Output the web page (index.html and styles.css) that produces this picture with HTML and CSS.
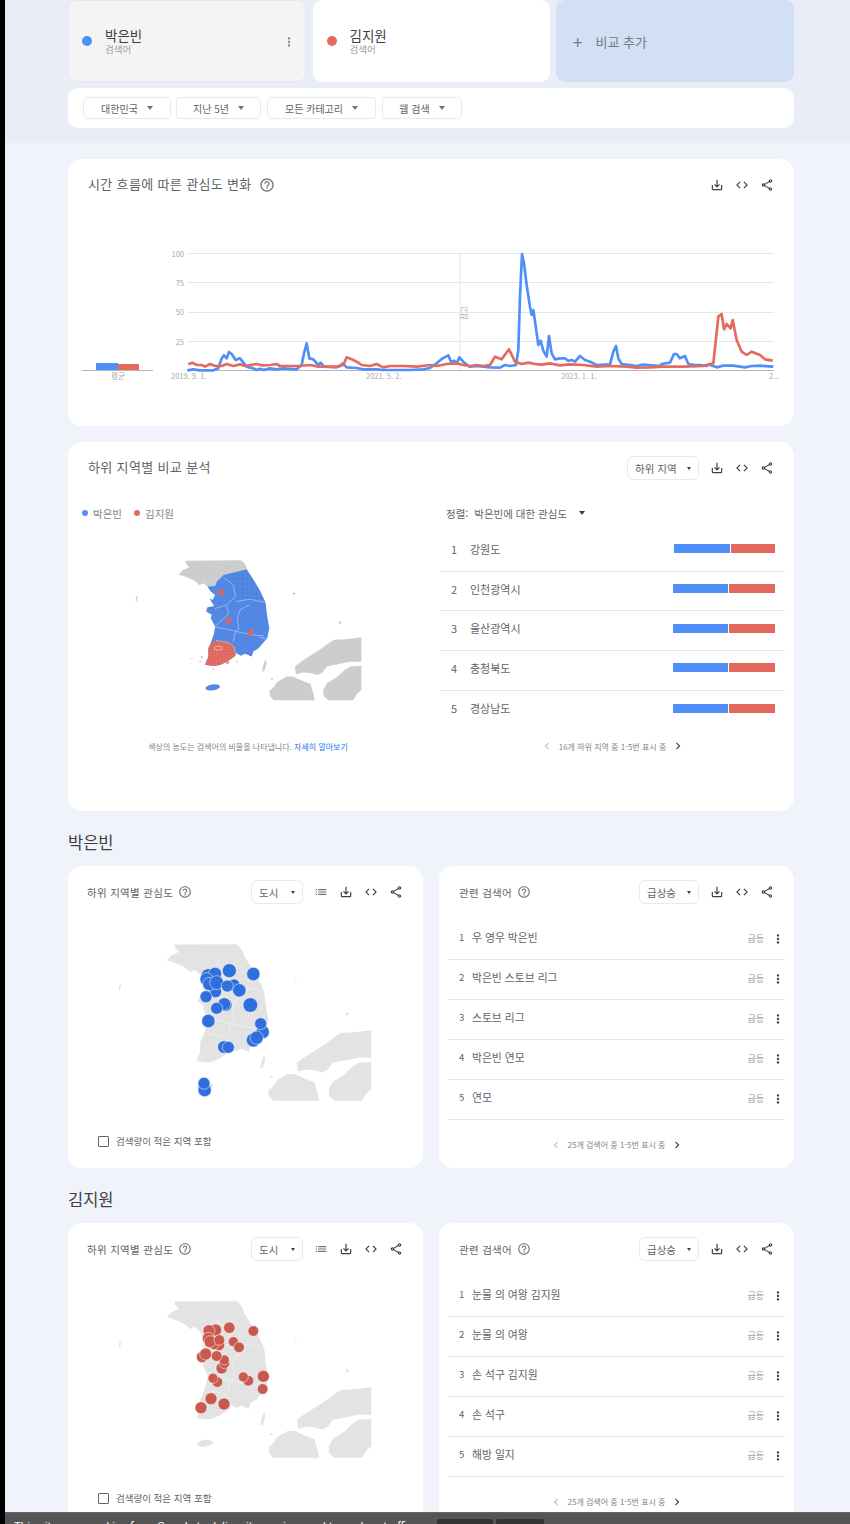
FILE: index.html
```html
<!DOCTYPE html>
<html lang="ko">
<head>
    <meta charset="UTF-8">
    <meta name="viewport" content="width=device-width, initial-scale=1.0">
    <title>Google 트렌드</title>
    <link rel="stylesheet" href="styles.css">
</head>
<body>
    <!-- Gemeinsame Formen fuer Icons und Karten -->
    <svg class="defs" aria-hidden="true">
        <defs>
            <path id="i-download" d="M19 12v7H5v-7H3v7c0 1.1.9 2 2 2h14c1.1 0 2-.9 2-2v-7h-2zm-6 .67l2.59-2.58L17 11.5l-5 5-5-5 1.41-1.41L11 12.67V3h2z"/>
            <path id="i-code" d="M9.4 16.6L4.8 12l4.6-4.6L8 6l-6 6 6 6 1.4-1.4zm5.2 0l4.6-4.6-4.6-4.6L16 6l6 6-6 6-1.4-1.4z"/>
            <path id="i-share" d="M18 16.08c-.76 0-1.44.3-1.96.77L8.91 12.7c.05-.23.09-.46.09-.7s-.04-.47-.09-.7l7.05-4.11c.54.5 1.25.81 2.04.81 1.66 0 3-1.34 3-3s-1.34-3-3-3-3 1.34-3 3c0 .24.04.47.09.7L8.04 9.81C7.5 9.31 6.79 9 6 9c-1.66 0-3 1.34-3 3s1.34 3 3 3c.79 0 1.5-.31 2.04-.81l7.12 4.16c-.05.21-.08.43-.08.65 0 1.61 1.31 2.92 2.92 2.92s2.92-1.31 2.92-2.92-1.31-2.92-2.92-2.92zM18 4c.55 0 1 .45 1 1s-.45 1-1 1-1-.45-1-1 .45-1 1-1zM6 13c-.55 0-1-.45-1-1s.45-1 1-1 1 .45 1 1-.45 1-1 1zm12 7.02c-.55 0-1-.45-1-1s.45-1 1-1 1 .45 1 1-.45 1-1 1z"/>
            <path id="i-help" d="M11 18h2v-2h-2v2zm1-16C6.48 2 2 6.48 2 12s4.48 10 10 10 10-4.48 10-10S17.52 2 12 2zm0 18c-4.41 0-8-3.59-8-8s3.59-8 8-8 8 3.59 8 8-3.59 8-8 8zm0-14c-2.21 0-4 1.79-4 4h2c0-1.1.9-2 2-2s2 .9 2 2c0 2-3 1.75-3 5h2c0-2.25 3-2.5 3-5 0-2.21-1.79-4-4-4z"/>
            <path id="i-list" d="M3 13h2v-2H3v2zm0 4h2v-2H3v2zm0-8h2V7H3v2zm4 4h14v-2H7v2zm0 4h14v-2H7v2zM7 7v2h14V7H7z"/>
            <path id="i-kebab" d="M12 8c1.1 0 2-.9 2-2s-.9-2-2-2-2 .9-2 2 .9 2 2 2zm0 2c-1.1 0-2 .9-2 2s.9 2 2 2 2-.9 2-2-.9-2-2-2zm0 6c-1.1 0-2 .9-2 2s.9 2 2 2 2-.9 2-2-.9-2-2-2z"/>
            <path id="i-prev" d="M15.4 7.4L14 6l-6 6 6 6 1.4-1.4L10.8 12z"/>
            <path id="i-next" d="M10 6L8.6 7.4 13.2 12l-4.6 4.6L10 18l6-6z"/>

            <g id="outer">
                <path d="M197 32L362 31Q375 38 382 58L345 68L310 75L290 95L283 110L262 110L250 100L238 106L222 92L200 82L175 74L188 60L208 52L196 40Z"/>
                <path d="M725 262L680 268L642 270L620 285L600 300L565 322L540 338L525 350L528 374L548 368L572 370L592 376L606 370L622 350L650 344L690 336L725 336Z"/>
                <path d="M725 348L692 350L672 362L652 382L622 400L610 420L612 440L625 452L700 452L712 432L725 420Z"/>
                <path d="M448 424L462 412L472 396L500 380L520 380L545 392L572 402L580 430L585 452L462 452L450 440Z"/>
                <path d="M437 328L430 345L426 366L434 362L440 340Z"/>
                <circle cx="660" cy="218" r="4"/>
                <circle cx="456" cy="388" r="3"/>
                <path d="M48 140L52 138L50 155L46 152Z"/>
            </g>
            <g id="korea">
                <path d="M310 75L380 58L402 92L420 122L437 158L441 195L448 235L442 265L420 290L415 296L400 305L395 320L375 312L362 318L348 310L346 318L335 326L320 336L300 346L280 349L255 345L265 320L265 295L270 285L278 262L282 250L285 230L272 205L275 195L258 185L262 172L282 168L268 145L278 150L285 135L272 125L262 110L285 108L290 95Z"/>
                <ellipse cx="278" cy="413" rx="22" ry="9" transform="rotate(-8 278 413)"/>
                <circle cx="522" cy="131" r="2.5"/>
            </g>
            <g id="borders">
                <polyline points="310,82 340,105 346,140 320,165 285,176"/>
                <polyline points="346,155 390,148 437,158"/>
                <polyline points="320,170 326,192 285,230"/>
                <polyline points="352,205 360,180 388,165"/>
                <polyline points="352,205 356,236 345,250 340,276"/>
                <polyline points="345,244 400,256 432,258"/>
                <polyline points="285,232 320,238 345,244"/>
                <polyline points="418,262 441,268"/>
                <polyline points="288,272 326,278 343,292 346,310"/>
            </g>
            <pattern id="dots-dark" width="14" height="14" patternUnits="userSpaceOnUse">
                <circle cx="4" cy="4" r="1.4" fill="#2c56a8"/>
            </pattern>
            <pattern id="dots-light" width="9" height="9" patternUnits="userSpaceOnUse">
                <circle cx="3" cy="3" r="1.3" fill="#f7c9c4"/>
            </pattern>
            <pattern id="dots-white" width="9" height="9" patternUnits="userSpaceOnUse">
                <circle cx="3" cy="3" r="1" fill="#fff" fill-opacity=".7"/>
            </pattern>
        </defs>
    </svg>

    <div class="page">
        <!-- Suchbegriffe und Filter -->
        <header class="top">
            <div class="terms">
                <div class="term term-active">
                    <span class="dot dot-big blue"></span>
                    <div>
                        <div class="term-name">박은빈</div>
                        <div class="term-type">검색어</div>
                    </div>
                    <svg class="icon term-more" viewBox="0 0 24 24"><use href="#i-kebab"/></svg>
                </div>
                <div class="term">
                    <span class="dot dot-big red"></span>
                    <div>
                        <div class="term-name">김지원</div>
                        <div class="term-type">검색어</div>
                    </div>
                </div>
                <div class="term term-add">
                    <span class="plus">+</span>
                    <span>비교 추가</span>
                </div>
            </div>
            <div class="filters">
                <div class="chip chip-1">대한민국 <i class="caret"></i></div>
                <div class="chip chip-2">지난 5년 <i class="caret"></i></div>
                <div class="chip chip-3">모든 카테고리 <i class="caret"></i></div>
                <div class="chip chip-4">웹 검색 <i class="caret"></i></div>
            </div>
        </header>

        <main class="content">
            <!-- Zeitverlauf -->
            <section class="card card-time">
                <div class="card-head">
                    <h2 class="card-title">시간 흐름에 따른 관심도 변화</h2>
                    <svg class="icon help help-wide" viewBox="0 0 24 24"><use href="#i-help"/></svg>
                    <div class="tools">
                        <svg class="icon" viewBox="0 0 24 24"><use href="#i-download"/></svg>
                        <svg class="icon" viewBox="0 0 24 24"><use href="#i-code"/></svg>
                        <svg class="icon" viewBox="0 0 24 24"><use href="#i-share"/></svg>
                    </div>
                </div>
                <svg class="chart" viewBox="68 211 726 215" width="726" height="215">
                    <g class="grid">
                        <line x1="187" x2="774" y1="253.5" y2="253.5"/>
                        <line x1="187" x2="774" y1="282.5" y2="282.5"/>
                        <line x1="187" x2="774" y1="312.5" y2="312.5"/>
                        <line x1="187" x2="774" y1="341.5" y2="341.5"/>
                        <line x1="460" x2="460" y1="253" y2="370"/>
                    </g>
                    <g class="axis">
                        <text x="184" y="257" text-anchor="end">100</text>
                        <text x="184" y="286" text-anchor="end">75</text>
                        <text x="184" y="315" text-anchor="end">50</text>
                        <text x="184" y="345" text-anchor="end">25</text>
                        <text x="171" y="379">2019. 9. 1.</text>
                        <text x="366" y="379">2021. 5. 2.</text>
                        <text x="561" y="379">2023. 1. 1.</text>
                        <text x="769" y="379">2...</text>
                        <text x="118" y="379" text-anchor="middle">평균</text>
                        <text transform="translate(467 320) rotate(-90)">참고</text>
                    </g>
                    <rect x="96" y="363" width="22" height="7" fill="#4f8ff7"/>
                    <rect x="118" y="364" width="21" height="6" fill="#e4695f"/>
                    <line x1="82" x2="153" y1="370.5" y2="370.5" class="base"/>
                    <line x1="187" x2="774" y1="370.5" y2="370.5" class="base"/>
                    <g transform="translate(70 230) scale(.33333)" class="lines">
                        <polyline class="line-blue" points="352,421 370,418 390,421 430,421 445,415 455,385 462,376 470,385 477,366 485,372 497,390 510,385 520,398 530,410 550,415 560,420 570,416 580,420 600,415 620,418 640,415 680,418 695,405 702,370 710,340 718,385 730,388 745,405 752,398 762,410 800,412 810,408 818,400 830,412 860,414 880,418 920,418 940,420 1020,420 1060,418 1080,414 1100,400 1118,385 1135,376 1143,395 1152,392 1160,400 1168,382 1180,395 1195,408 1200,410 1220,408 1260,412 1290,413 1305,405 1320,408 1338,405 1345,360 1350,200 1356,72 1362,100 1370,165 1380,230 1385,255 1390,240 1398,295 1405,345 1412,332 1420,362 1430,380 1437,318 1445,370 1455,388 1470,385 1485,385 1495,393 1505,390 1515,395 1530,378 1545,390 1560,395 1580,405 1620,403 1630,365 1638,348 1645,385 1655,402 1680,405 1700,408 1720,404 1770,408 1775,402 1800,398 1812,372 1820,372 1830,385 1845,378 1855,402 1875,405 1890,405 1910,408 1915,403 1940,412 1960,407 1990,407 2025,412 2045,408 2070,407 2110,410"/>
                        <polyline class="line-red" points="355,403 367,398 380,405 395,405 405,410 420,402 435,408 455,408 470,402 490,408 510,403 525,408 540,405 560,402 575,406 600,405 620,402 630,408 660,408 690,408 720,405 745,410 800,410 820,405 830,382 845,388 860,395 875,405 900,408 920,402 940,412 960,408 1000,408 1040,410 1080,405 1100,408 1130,402 1160,400 1180,405 1200,408 1220,405 1240,408 1260,405 1275,380 1295,388 1317,358 1335,395 1355,402 1375,398 1395,402 1415,404 1440,400 1470,406 1500,403 1540,405 1580,410 1620,408 1670,410 1700,413 1740,412 1780,410 1840,410 1900,408 1930,400 1945,260 1955,252 1962,298 1970,282 1982,295 1988,270 2000,330 2015,365 2030,375 2045,365 2070,375 2085,388 2108,392"/>
                    </g>
                </svg>
            </section>

            <!-- Regionenvergleich -->
            <section class="card card-compare">
                <div class="card-head">
                    <h2 class="card-title">하위 지역별 비교 분석</h2>
                    <div class="tools">
                        <div class="select select-region">하위 지역 <i class="caret caret-dark"></i></div>
                        <svg class="icon" viewBox="0 0 24 24"><use href="#i-download"/></svg>
                        <svg class="icon" viewBox="0 0 24 24"><use href="#i-code"/></svg>
                        <svg class="icon" viewBox="0 0 24 24"><use href="#i-share"/></svg>
                    </div>
                </div>
                <div class="compare-body">
                    <div class="compare-map">
                        <div class="legend">
                            <span class="dot blue"></span><span>박은빈</span>
                            <span class="dot red"></span><span>김지원</span>
                        </div>
                        <svg class="map-big" viewBox="0 0 780 460" width="260" height="153">
                            <use href="#outer" fill="#cdcdcd"/>
                            <use href="#korea" fill="#5288e4"/>
                            <path d="M310 75L380 58L402 92L420 122L437 158L390 148L346 155L346 140L340 105Z" fill="url(#dots-dark)"/>
                            <path d="M270 285L288 272L326 278L343 292L346 318L335 326L320 336L300 346L280 349L255 345L265 320L265 295Z" fill="#e0655b"/>
                            <path d="M270 285L288 272L326 278L343 292L346 318L335 326L320 336L300 346L280 349L255 345L265 320L265 295Z" fill="url(#dots-light)"/>
                            <use href="#borders" class="borders"/>
                            <ellipse cx="295" cy="295" rx="12" ry="6" class="gwangju"/>
                            <circle cx="303" cy="127" r="9" fill="#e0655b"/>
                            <circle cx="325" cy="212" r="9" fill="#e0655b"/>
                            <ellipse cx="392" cy="248" rx="6" ry="13" transform="rotate(35 392 248)" fill="#e0655b"/>
                            <circle cx="245" cy="322" r="4" fill="#f5c4bc"/>
                            <circle cx="240" cy="335" r="3" fill="#f5c4bc"/>
                            <circle cx="322" cy="338" r="5" fill="#e88f86"/>
                            <circle cx="350" cy="335" r="3" fill="#f5c4bc"/>
                            <circle cx="280" cy="358" r="3" fill="#f5c4bc"/>
                            <circle cx="212" cy="327" r="2" fill="#f5c4bc"/>
                        </svg>
                        <p class="map-note">색상의 농도는 검색어의 비율을 나타냅니다. <span class="link">자세히 알아보기</span></p>
                    </div>
                    <div class="compare-list">
                        <div class="sort"><span>정렬:</span><span>박은빈에 대한 관심도</span><i class="caret caret-dark"></i></div>
                        <div class="row"><span class="row-num">1</span><span class="row-name">강원도</span><div class="bar"><span class="blue" style="width:56px"></span><span class="red" style="width:44px"></span></div></div>
                        <div class="row"><span class="row-num">2</span><span class="row-name">인천광역시</span><div class="bar"><span class="blue" style="width:55px"></span><span class="red" style="width:46px"></span></div></div>
                        <div class="row"><span class="row-num">3</span><span class="row-name">울산광역시</span><div class="bar"><span class="blue" style="width:55px"></span><span class="red" style="width:46px"></span></div></div>
                        <div class="row"><span class="row-num">4</span><span class="row-name">충청북도</span><div class="bar"><span class="blue" style="width:55px"></span><span class="red" style="width:46px"></span></div></div>
                        <div class="row row-last"><span class="row-num">5</span><span class="row-name">경상남도</span><div class="bar"><span class="blue" style="width:55px"></span><span class="red" style="width:46px"></span></div></div>
                        <div class="pager">
                            <svg class="pager-icon pager-off" viewBox="0 0 24 24"><use href="#i-prev"/></svg>
                            <span>16개 하위 지역 중 1-5번 표시 중</span>
                            <svg class="pager-icon" viewBox="0 0 24 24"><use href="#i-next"/></svg>
                        </div>
                    </div>
                </div>
            </section>

            <!-- 박은빈 -->
            <h3 class="term-heading">박은빈</h3>
            <div class="pair">
                <section class="card card-half">
                    <div class="card-head card-head-map">
                        <h2 class="card-title card-title-small">하위 지역별 관심도</h2>
                        <svg class="icon help" viewBox="0 0 24 24"><use href="#i-help"/></svg>
                        <div class="tools">
                            <div class="select select-city">도시 <i class="caret caret-dark"></i></div>
                            <svg class="icon icon-gray" viewBox="0 0 24 24"><use href="#i-list"/></svg>
                            <svg class="icon" viewBox="0 0 24 24"><use href="#i-download"/></svg>
                            <svg class="icon" viewBox="0 0 24 24"><use href="#i-code"/></svg>
                            <svg class="icon" viewBox="0 0 24 24"><use href="#i-share"/></svg>
                        </div>
                    </div>
                    <svg class="map-small" viewBox="0 144 1050 621" width="350" height="207">
                        <g transform="translate(95 188) scale(1.116)">
                            <use href="#outer" fill="#e3e3e3"/>
                            <use href="#korea" fill="#e3e3e3"/>
                            <use href="#borders" class="borders"/>
                        </g>
                        <g class="bubbles bubbles-blue">
                            <circle cx="478" cy="302" r="21"/>
                            <circle cx="550" cy="312" r="20"/>
                            <circle cx="415" cy="318" r="22"/>
                            <circle cx="435" cy="312" r="20"/>
                            <circle cx="410" cy="328" r="20"/>
                            <circle cx="492" cy="345" r="18"/>
                            <circle cx="437" cy="365" r="18"/>
                            <circle cx="418" cy="342" r="20"/>
                            <circle cx="440" cy="338" r="21"/>
                            <circle cx="472" cy="348" r="18"/>
                            <circle cx="508" cy="361" r="20"/>
                            <circle cx="408" cy="380" r="18"/>
                            <circle cx="467" cy="405" r="19"/>
                            <circle cx="463" cy="402" r="19"/>
                            <circle cx="440" cy="415" r="18"/>
                            <circle cx="541" cy="405" r="22"/>
                            <circle cx="415" cy="453" r="20"/>
                            <circle cx="578" cy="486" r="20"/>
                            <circle cx="572" cy="461" r="18"/>
                            <circle cx="550" cy="510" r="21"/>
                            <circle cx="560" cy="503" r="20"/>
                            <circle cx="462" cy="531" r="19"/>
                            <circle cx="475" cy="532" r="18"/>
                            <circle cx="404" cy="660" r="20"/>
                            <circle cx="402" cy="640" r="18"/>
                        </g>
                        <circle cx="472" cy="348" r="15" fill="url(#dots-white)"/>
                    </svg>
                    <label class="check"><span class="box"></span>검색량이 적은 지역 포함</label>
                </section>

                <section class="card card-half">
                    <div class="card-head card-head-list">
                        <h2 class="card-title card-title-small">관련 검색어</h2>
                        <svg class="icon help" viewBox="0 0 24 24"><use href="#i-help"/></svg>
                        <div class="tools">
                            <div class="select select-rise">급상승 <i class="caret caret-dark"></i></div>
                            <svg class="icon" viewBox="0 0 24 24"><use href="#i-download"/></svg>
                            <svg class="icon" viewBox="0 0 24 24"><use href="#i-code"/></svg>
                            <svg class="icon" viewBox="0 0 24 24"><use href="#i-share"/></svg>
                        </div>
                    </div>
                    <div class="queries">
                        <div class="query"><span class="query-num">1</span><span class="query-name">우 영우 박은빈</span><span class="query-tag">급등</span><svg class="icon kebab" viewBox="0 0 24 24"><use href="#i-kebab"/></svg></div>
                        <div class="query"><span class="query-num">2</span><span class="query-name">박은빈 스토브 리그</span><span class="query-tag">급등</span><svg class="icon kebab" viewBox="0 0 24 24"><use href="#i-kebab"/></svg></div>
                        <div class="query"><span class="query-num">3</span><span class="query-name">스토브 리그</span><span class="query-tag">급등</span><svg class="icon kebab" viewBox="0 0 24 24"><use href="#i-kebab"/></svg></div>
                        <div class="query"><span class="query-num">4</span><span class="query-name">박은빈 연모</span><span class="query-tag">급등</span><svg class="icon kebab" viewBox="0 0 24 24"><use href="#i-kebab"/></svg></div>
                        <div class="query"><span class="query-num">5</span><span class="query-name">연모</span><span class="query-tag">급등</span><svg class="icon kebab" viewBox="0 0 24 24"><use href="#i-kebab"/></svg></div>
                    </div>
                    <div class="pager pager-queries">
                        <svg class="pager-icon pager-off" viewBox="0 0 24 24"><use href="#i-prev"/></svg>
                        <span>25개 검색어 중 1-5번 표시 중</span>
                        <svg class="pager-icon" viewBox="0 0 24 24"><use href="#i-next"/></svg>
                    </div>
                </section>
            </div>

            <!-- 김지원 -->
            <h3 class="term-heading">김지원</h3>
            <div class="pair">
                <section class="card card-half">
                    <div class="card-head card-head-map">
                        <h2 class="card-title card-title-small">하위 지역별 관심도</h2>
                        <svg class="icon help" viewBox="0 0 24 24"><use href="#i-help"/></svg>
                        <div class="tools">
                            <div class="select select-city">도시 <i class="caret caret-dark"></i></div>
                            <svg class="icon icon-gray" viewBox="0 0 24 24"><use href="#i-list"/></svg>
                            <svg class="icon" viewBox="0 0 24 24"><use href="#i-download"/></svg>
                            <svg class="icon" viewBox="0 0 24 24"><use href="#i-code"/></svg>
                            <svg class="icon" viewBox="0 0 24 24"><use href="#i-share"/></svg>
                        </div>
                    </div>
                    <svg class="map-small" viewBox="0 135 1050 621" width="350" height="207">
                        <g transform="translate(95 179) scale(1.116)">
                            <use href="#outer" fill="#e3e3e3"/>
                            <use href="#korea" fill="#e3e3e3"/>
                            <use href="#borders" class="borders"/>
                        </g>
                        <g class="bubbles bubbles-red">
                            <circle cx="478" cy="293" r="17"/>
                            <circle cx="550" cy="303" r="16"/>
                            <circle cx="437" cy="300" r="18"/>
                            <circle cx="417" cy="302" r="18"/>
                            <circle cx="447" cy="345" r="17"/>
                            <circle cx="432" cy="345" r="14"/>
                            <circle cx="415" cy="325" r="18"/>
                            <circle cx="420" cy="335" r="18"/>
                            <circle cx="448" cy="330" r="16"/>
                            <circle cx="490" cy="335" r="15"/>
                            <circle cx="507" cy="352" r="16"/>
                            <circle cx="396" cy="381" r="17"/>
                            <circle cx="407" cy="372" r="18"/>
                            <circle cx="455" cy="415" r="17"/>
                            <circle cx="463" cy="400" r="16"/>
                            <circle cx="463" cy="390" r="15"/>
                            <circle cx="440" cy="378" r="16"/>
                            <circle cx="442" cy="456" r="16"/>
                            <circle cx="429" cy="445" r="15"/>
                            <circle cx="535" cy="452" r="16"/>
                            <circle cx="520" cy="441" r="15"/>
                            <circle cx="580" cy="439" r="18"/>
                            <circle cx="578" cy="477" r="16"/>
                            <circle cx="423" cy="506" r="18"/>
                            <circle cx="393" cy="533" r="18"/>
                            <circle cx="462" cy="522" r="18"/>
                        </g>
                        <circle cx="478" cy="293" r="13" fill="url(#dots-white)"/>
                        <circle cx="520" cy="441" r="13" fill="url(#dots-white)"/>
                        <circle cx="440" cy="378" r="12" fill="url(#dots-white)"/>
                    </svg>
                    <label class="check"><span class="box"></span>검색량이 적은 지역 포함</label>
                </section>

                <section class="card card-half">
                    <div class="card-head card-head-list">
                        <h2 class="card-title card-title-small">관련 검색어</h2>
                        <svg class="icon help" viewBox="0 0 24 24"><use href="#i-help"/></svg>
                        <div class="tools">
                            <div class="select select-rise">급상승 <i class="caret caret-dark"></i></div>
                            <svg class="icon" viewBox="0 0 24 24"><use href="#i-download"/></svg>
                            <svg class="icon" viewBox="0 0 24 24"><use href="#i-code"/></svg>
                            <svg class="icon" viewBox="0 0 24 24"><use href="#i-share"/></svg>
                        </div>
                    </div>
                    <div class="queries">
                        <div class="query"><span class="query-num">1</span><span class="query-name">눈물 의 여왕 김지원</span><span class="query-tag">급등</span><svg class="icon kebab" viewBox="0 0 24 24"><use href="#i-kebab"/></svg></div>
                        <div class="query"><span class="query-num">2</span><span class="query-name">눈물 의 여왕</span><span class="query-tag">급등</span><svg class="icon kebab" viewBox="0 0 24 24"><use href="#i-kebab"/></svg></div>
                        <div class="query"><span class="query-num">3</span><span class="query-name">손 석구 김지원</span><span class="query-tag">급등</span><svg class="icon kebab" viewBox="0 0 24 24"><use href="#i-kebab"/></svg></div>
                        <div class="query"><span class="query-num">4</span><span class="query-name">손 석구</span><span class="query-tag">급등</span><svg class="icon kebab" viewBox="0 0 24 24"><use href="#i-kebab"/></svg></div>
                        <div class="query"><span class="query-num">5</span><span class="query-name">해방 일지</span><span class="query-tag">급등</span><svg class="icon kebab" viewBox="0 0 24 24"><use href="#i-kebab"/></svg></div>
                    </div>
                    <div class="pager pager-queries">
                        <svg class="pager-icon pager-off" viewBox="0 0 24 24"><use href="#i-prev"/></svg>
                        <span>25개 검색어 중 1-5번 표시 중</span>
                        <svg class="pager-icon" viewBox="0 0 24 24"><use href="#i-next"/></svg>
                    </div>
                </section>
            </div>
        </main>

        <!-- Cookie-Leiste liegt ueber dem Inhalt -->
        <div class="cookie">
            <span class="cookie-text">This site uses cookies from Google to deliver its services and to analyze traffic.</span>
            <span class="cookie-btn cookie-more">Learn more</span>
            <span class="cookie-btn cookie-ok">Ok, got it</span>
        </div>
    </div>
</body>
</html>
```

FILE: styles.css
```css
html, body {
    margin: 0;
    height: 1524px;
    overflow: hidden;
    background-color: #000;
}
body {
    font-family: "Noto Sans CJK KR", "Noto Sans", Roboto, sans-serif;
    color: #5f6368;
}
h2, h3, p {
    margin: 0;
    font-weight: 400;
}
.defs {
    position: absolute;
    width: 0;
    height: 0;
}
.page {
    position: relative;
    margin-left: 5px;
    height: 1524px;
    overflow: hidden;
    background-color: #f0f3f9;
}

/* Kopfbereich */
.top {
    height: 143px;
    padding: 0 56px 0 63px;
    box-sizing: border-box;
    background-color: #e8edf6;
}
.terms {
    display: grid;
    grid-template-columns: 238px 237px 238px;
    gap: 6.5px;
    height: 82px;
}
.term {
    position: relative;
    display: flex;
    align-items: center;
    gap: 13px;
    padding-left: 14px;
    background-color: #fff;
    border-radius: 9px;
}
.term-active {
    background-color: #f4f4f4;
    box-shadow: 0 0 0 1px #e7e9ec inset;
}
.term-name {
    font-size: 13.5px;
    line-height: 16px;
    color: #3c4043;
}
.term-type {
    font-size: 9.5px;
    line-height: 12px;
    color: #9aa0a6;
}
.term .term-more {
    position: absolute;
    right: 10px;
    top: 35px;
    fill: #80868b;
}
.term-add {
    gap: 13px;
    padding-left: 17px;
    background-color: #d2e0f5;
    font-size: 13px;
    color: #757b82;
}
.plus {
    font-size: 17px;
    line-height: 17px;
}
.dot {
    display: inline-block;
    width: 6px;
    height: 6px;
    border-radius: 50%;
}
.dot-big {
    width: 10px;
    height: 10px;
    flex: none;
}
.blue {
    background-color: #4f8ff7;
}
.red {
    background-color: #e4695f;
}
.filters {
    display: flex;
    align-items: center;
    gap: 5px;
    height: 40px;
    margin-top: 6px;
    padding-left: 15px;
    background-color: #fff;
    border-radius: 10px;
}
.chip {
    display: flex;
    align-items: center;
    justify-content: center;
    gap: 9px;
    box-sizing: border-box;
    height: 22px;
    border: 1px solid #e8eaed;
    border-radius: 4px;
    font-size: 10px;
    color: #5f6368;
}
.chip-1 { width: 88px; }
.chip-2 { width: 85px; }
.chip-3 { width: 109px; margin-left: 1px; }
.chip-4 { width: 80px; margin-left: 1px; }
.caret {
    display: inline-block;
    width: 0;
    height: 0;
    border-left: 3.5px solid transparent;
    border-right: 3.5px solid transparent;
    border-top: 4px solid #70757a;
}
.caret-dark {
    border-top-color: #3c4043;
}

/* Karten */
.content {
    padding: 16px 56px 0 63px;
}
.card {
    background-color: #fff;
    border-radius: 14px;
}
.card-time {
    height: 267px;
}
.card-compare {
    height: 369px;
    margin-top: 16px;
}
.card-head {
    display: flex;
    align-items: center;
    height: 52px;
    padding: 0 20px;
}
.card-head-map {
    padding-left: 19px;
}
.card-title {
    margin-bottom: 3px;
    font-size: 13px;
    letter-spacing: .35px;
    color: #5f6368;
}
.card-title-small {
    margin-bottom: 0;
    font-size: 10.5px;
    letter-spacing: .3px;
}
.tools {
    display: flex;
    align-items: center;
    gap: 11px;
    margin-left: auto;
}
.icon {
    display: block;
    width: 14px;
    height: 14px;
    fill: #3c4043;
}
.icon-gray {
    fill: #70757a;
}
.help {
    margin-left: 5px;
    fill: #70757a;
}
.help-wide {
    width: 16px;
    height: 16px;
    margin-left: 7px;
}
.select {
    display: flex;
    align-items: center;
    justify-content: space-between;
    box-sizing: border-box;
    height: 24px;
    padding: 0 7px;
    border: 1px solid #e8eaed;
    border-radius: 6px;
    font-size: 10.5px;
    color: #5f6368;
}
.select .caret {
    border-left-width: 2.5px;
    border-right-width: 2.5px;
    border-top-width: 3px;
}
.select-region { width: 72px; }
.select-city { width: 52px; margin-right: 0; }
.select-rise { width: 60px; }

/* Zeitverlauf */
.chart {
    display: block;
}
.grid line {
    stroke: #e6e6e6;
    stroke-width: 1;
}
.base {
    stroke: #b5b5b5;
    stroke-width: 1;
}
.axis text {
    font-size: 7.5px;
    fill: #a8a8a8;
}
.lines polyline {
    fill: none;
    stroke-width: 8;
    stroke-linejoin: round;
}
.line-blue {
    stroke: #4f8ff7;
}
.line-red {
    stroke: #e4695f;
}

/* Regionenvergleich */
.compare-body {
    display: grid;
    grid-template-columns: 360px 345px;
    gap: 12px;
}
.legend {
    display: flex;
    align-items: center;
    gap: 5px;
    height: 20px;
    margin-top: 9px;
    padding-left: 14px;
    font-size: 10.5px;
    color: #80868b;
}
.legend .red {
    margin-left: 7px;
}
.map-big {
    display: block;
    margin: 27px 0 0 52px;
}
.borders {
    fill: none;
    stroke: #fff;
    stroke-opacity: .75;
    stroke-width: 1.5;
}
.gwangju {
    fill: #e0655b;
    stroke: #fff;
    stroke-width: 1.5;
}
.map-note {
    margin-top: 38px;
    font-size: 8px;
    line-height: 12px;
    text-align: center;
    color: #80868b;
}
.link {
    color: #1a73e8;
}
.sort {
    display: flex;
    align-items: center;
    gap: 6px;
    height: 20px;
    margin: 9px 0;
    padding-left: 6px;
    font-size: 10.5px;
    color: #5f6368;
}
.sort .caret {
    margin-left: 6px;
    border-top-color: #3c4043;
}
.row {
    display: flex;
    align-items: center;
    box-sizing: border-box;
    height: 39.7px;
    padding: 0 11px 5px 11px;
    border-bottom: 1px solid #e8e8e8;
    font-size: 11px;
    color: #5f6368;
}
.row-last {
    border-bottom: none;
}
.row-num {
    width: 19px;
}
.bar {
    display: flex;
    gap: 1px;
    margin-left: auto;
    margin-right: -1px;
}
.bar span {
    display: block;
    height: 9px;
}
.pager {
    display: flex;
    align-items: center;
    justify-content: center;
    gap: 5px;
    height: 14px;
    margin-top: 9px;
    font-size: 8px;
    color: #80868b;
}
.pager-icon {
    width: 14px;
    height: 14px;
    fill: #3c4043;
}
.pager-off {
    fill: #bdc1c6;
}

/* Begriffe */
.term-heading {
    margin-top: 20px;
    font-size: 16.5px;
    line-height: 22px;
    height: 35px;
    color: #3c4043;
}
.pair {
    display: grid;
    grid-template-columns: 355px 355px;
    gap: 16px;
}
.card-half {
    height: 302px;
}
.map-small {
    display: block;
    margin-left: 2px;
}
.bubbles circle {
    stroke: #fff;
    stroke-width: 1.5;
}
.bubbles-blue circle {
    fill: #2f6fdb;
}
.bubbles-red circle {
    fill: #c9584e;
}
.check {
    display: flex;
    align-items: center;
    gap: 7px;
    height: 16px;
    margin-top: 8px;
    padding-left: 30px;
    font-size: 9.5px;
    color: #5f6368;
}
.box {
    display: block;
    box-sizing: border-box;
    width: 11px;
    height: 11px;
    border: 1.5px solid #5f6368;
    border-radius: 1px;
}

/* Verwandte Suchanfragen */
.queries {
    padding: 1.5px 9px 0;
}
.query {
    display: flex;
    align-items: center;
    box-sizing: border-box;
    height: 40px;
    padding: 0 0 4px 11px;
    border-bottom: 1px solid #e8e8e8;
    font-size: 10.8px;
    color: #5f6368;
}
.query-num {
    width: 13px;
    font-size: 9.5px;
}
.query-tag {
    margin-left: auto;
    margin-right: 7px;
    margin-top: 3px;
    font-size: 9px;
    color: #9aa0a6;
}
.kebab {
    margin-top: 4px;
}
.pager-queries {
    margin-top: 18px;
}

/* Cookie-Leiste */
.cookie {
    position: absolute;
    left: 0;
    right: 0;
    top: 1513px;
    height: 11px;
    overflow: hidden;
    background-color: #555;
    box-shadow: 0 -1px 0 #666;
    font-family: Roboto, sans-serif;
    font-size: 11.5px;
    color: #fff;
}
.cookie-text {
    position: absolute;
    left: 9px;
    top: 6px;
    white-space: nowrap;
}
.cookie-btn {
    position: absolute;
    top: 6px;
    height: 20px;
    box-sizing: border-box;
    padding-top: 3px;
    background-color: #333;
    border-radius: 2px;
    font-size: 11px;
    text-align: center;
}
.cookie-more {
    left: 432px;
    width: 56px;
}
.cookie-ok {
    left: 491px;
    width: 48px;
}
```
